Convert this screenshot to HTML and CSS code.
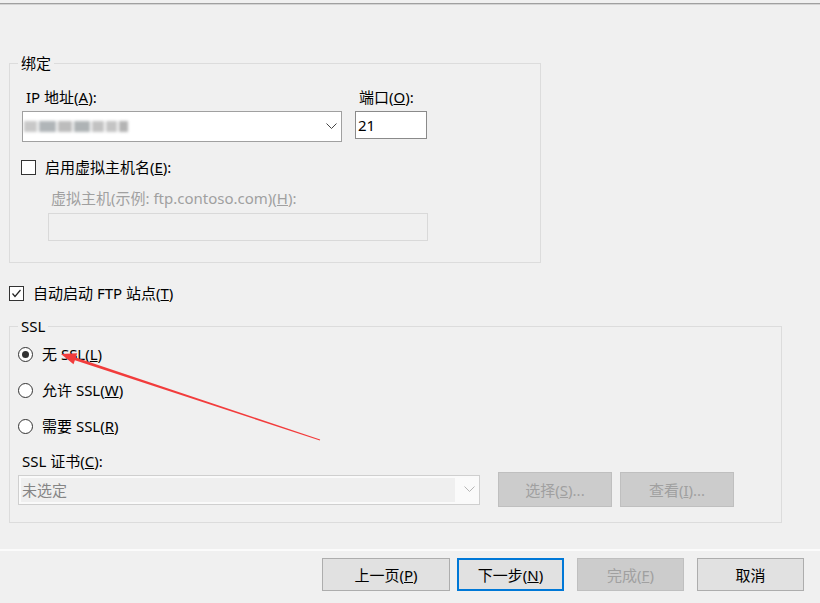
FILE: index.html
```html
<!DOCTYPE html>
<html lang="zh-CN">
<head>
<meta charset="utf-8">
<title>FTP 站点绑定和 SSL 设置</title>
<link rel="stylesheet" href="styles.css">
</head>
<body>
<div class="topline"></div>

<div class="group g1">
  <div class="gtitle">绑定</div>
  <div class="ip-row">
    <div class="col">
      <div class="lbl ind">IP 地址(<u>A</u>):</div>
      <div class="combo">
        <div class="blur">
          <span class="bk b1"></span><span class="bk b2"></span><span class="bk b3"></span><span class="bk b4"></span><span class="bk b5"></span><span class="bk b6"></span><span class="bk b7"></span>
        </div>
        <svg class="chev" width="11" height="7" viewBox="0 0 11 7"><polyline points="0.5,0.5 5.5,5.5 10.5,0.5" fill="none" stroke="#444" stroke-width="1"/></svg>
      </div>
    </div>
    <div class="col">
      <div class="lbl ind">端口(<u>O</u>):</div>
      <div class="port">21</div>
    </div>
  </div>
  <div class="check-row vh-check">
    <span class="box"></span>
    <span>启用虚拟主机名(<u>E</u>):</span>
  </div>
  <div class="vh-lbl">虚拟主机(示例: ftp.contoso.com)(<u>H</u>):</div>
  <div class="vh-input"></div>
</div>

<div class="check-row auto-row">
  <span class="box">
    <svg width="13" height="13" viewBox="0 0 13 13"><polyline points="2.5,6.5 5,9.5 10.5,3" fill="none" stroke="#222" stroke-width="1.2"/></svg>
  </span>
  <span>自动启动 FTP 站点(<u>T</u>)</span>
</div>

<div class="group g2">
  <div class="gtitle">SSL</div>
  <div class="radio-row first"><span class="rad on"></span><span>无 SSL(<u>L</u>)</span></div>
  <div class="radio-row"><span class="rad"></span><span>允许 SSL(<u>W</u>)</span></div>
  <div class="radio-row"><span class="rad"></span><span>需要 SSL(<u>R</u>)</span></div>
  <div class="cert-lbl">SSL 证书(<u>C</u>):</div>
  <div class="cert-row">
    <div class="cert-combo">
      <div class="cert-val">未选定</div>
      <svg class="chev2" width="11" height="7" viewBox="0 0 11 7"><polyline points="0.5,0.5 5.5,5.5 10.5,0.5" fill="none" stroke="#b5b5b5" stroke-width="1"/></svg>
    </div>
    <div class="btn disabled btn-sm btn-sel">选择(<u>S</u>)...</div>
    <div class="btn disabled btn-sm btn-view">查看(<u>I</u>)...</div>
  </div>
</div>

<div class="sep"></div>

<div class="footer">
  <div class="btn btn-prev">上一页(<u>P</u>)</div>
  <div class="btn btn-next">下一步(<u>N</u>)</div>
  <div class="btn disabled btn-finish">完成(<u>F</u>)</div>
  <div class="btn btn-cancel">取消</div>
</div>

<svg class="arrow" width="820" height="603" viewBox="0 0 820 603">
  <polygon points="61,354 77.2,353.2 75.8,357.6 320.15,439.55 319.85,440.45 74.9,360.2 73.5,364.2" fill="#f23c3c"/>
</svg>
</body>
</html>
```

FILE: styles.css
```css
html, body {
  margin: 0;
  padding: 0;
}
body {
  width: 820px;
  height: 603px;
  overflow: hidden;
  position: relative;
  background: #f0f0f0;
  color: #000;
  font-family: "Noto Sans", "Noto Sans CJK SC", sans-serif;
  font-size: 15px;
  line-height: 20px;
}
u {
  text-decoration: underline;
  text-underline-offset: 1px;
  text-decoration-thickness: 1px;
}

.topline {
  margin-top: 3px;
  height: 0;
  border-top: 1px solid #a0a0a0;
  border-bottom: 1px solid #d4d4d4;
}

.group {
  box-sizing: border-box;
  border: 1px solid #dcdcdc;
  margin-left: 9px;
}
.gtitle {
  width: fit-content;
  padding: 0 3px;
  background: #f0f0f0;
  line-height: 20px;
  margin-top: -11px;
}

.g1 {
  width: 532px;
  margin-top: 58px;
  padding: 0 0 21px 12px;
}
.g1 .gtitle {
  margin-left: -4px;
}

.ip-row {
  display: flex;
  gap: 13px;
  margin-top: 14px;
}
.lbl.ind {
  margin-left: 4px;
}
.combo {
  box-sizing: border-box;
  margin-top: 4px;
  width: 320px;
  height: 31px;
  border: 1px solid #a0a0a0;
  background: #fff;
  display: flex;
  align-items: center;
}
.blur {
  display: flex;
  align-items: center;
  gap: 2px;
  margin-left: 1px;
  filter: blur(1.6px);
}
.bk {
  display: block;
  height: 11px;
  background: #b4b4b4;
}
.b1 { width: 13px; background: #c8c8c8; }
.b2 { width: 17px; background: #b0b5b8; }
.b3 { width: 14px; background: #bcbcbc; }
.b4 { width: 16px; background: #aeb3b5; }
.b5 { width: 12px; background: #c2c2c2; }
.b6 { width: 11px; background: #c4c4c4; }
.b7 { width: 9px; background: #b4b4b4; }
.chev {
  margin-left: auto;
  margin-right: 4px;
}
.port {
  box-sizing: border-box;
  margin-top: 4px;
  width: 72px;
  height: 28px;
  border: 1px solid #8a8a8a;
  background: #fff;
  padding-left: 2px;
  line-height: 26px;
}

.check-row {
  display: flex;
  align-items: center;
  gap: 9px;
}
.box {
  box-sizing: border-box;
  width: 15px;
  height: 15px;
  border: 1px solid #333;
  background: #fff;
  flex: none;
  display: flex;
  align-items: center;
  justify-content: center;
}
.vh-check {
  margin: 15px 0 0 -1px;
}
.vh-lbl {
  margin: 11px 0 0 29px;
  color: #a0a0a0;
}
.vh-input {
  box-sizing: border-box;
  margin: 5px 0 0 26px;
  width: 380px;
  height: 28px;
  border: 1px solid #d9d9d9;
  background: #f0f0f0;
}

.auto-row {
  margin: 20px 0 0 9px;
}

.g2 {
  width: 773px;
  margin-top: 23px;
  padding: 0 0 15px 8px;
}
.radio-row {
  display: flex;
  align-items: center;
  gap: 9px;
  margin-top: 16px;
}
.radio-row.first {
  margin-top: 8px;
}
.rad {
  box-sizing: border-box;
  width: 15px;
  height: 15px;
  border-radius: 50%;
  border: 1px solid #333;
  background: #fff;
  flex: none;
  display: flex;
  align-items: center;
  justify-content: center;
}
.rad.on::after {
  content: "";
  width: 7px;
  height: 7px;
  border-radius: 50%;
  background: #333;
}
.cert-lbl {
  margin: 15px 0 0 4px;
}
.cert-row {
  display: flex;
  align-items: center;
  height: 35px;
  margin-top: 1px;
}
.cert-combo {
  box-sizing: border-box;
  width: 462px;
  height: 30px;
  border: 1px solid #cfcfcf;
  background: #fafafa;
  padding: 2px;
  display: flex;
  align-items: center;
}
.cert-val {
  width: 434px;
  height: 24px;
  background: #efefef;
  color: #858585;
  line-height: 24px;
  padding-left: 1px;
  box-sizing: border-box;
}
.chev2 {
  margin-left: 9px;
}

.btn {
  box-sizing: border-box;
  border: 1px solid #adadad;
  background: #e1e1e1;
  display: flex;
  align-items: center;
  justify-content: center;
  height: 33px;
}
.btn.disabled {
  background: #cccccc;
  border-color: #bfbfbf;
  color: #a0a0a0;
}
.btn-sm {
  width: 114px;
  height: 35px;
}
.btn-sel {
  margin-left: 18px;
}
.btn-view {
  margin-left: 8px;
}

.sep {
  margin-top: 26px;
  height: 2px;
  background: #fbfbfb;
}
.footer {
  display: flex;
  margin-top: 7px;
  padding-left: 322px;
}
.btn-prev {
  width: 128px;
}
.btn-next {
  width: 107px;
  margin-left: 7px;
  border: 2px solid #0078d7;
}
.btn-finish {
  width: 107px;
  margin-left: 13px;
}
.btn-cancel {
  width: 107px;
  margin-left: 13px;
}

.arrow {
  position: absolute;
  left: 0;
  top: 0;
  pointer-events: none;
}
```
